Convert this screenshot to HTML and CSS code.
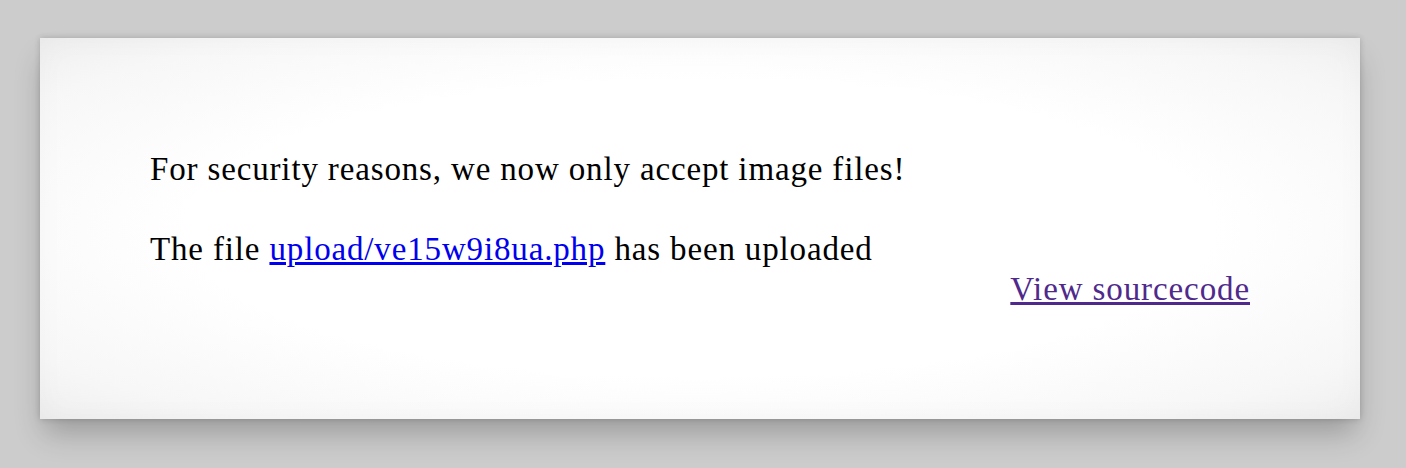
FILE: index.html
```
<!DOCTYPE html>
<html>
<head>
<meta charset="utf-8">
<link rel="stylesheet" href="styles.css">
</head>
<body>
<div class="content">
For security reasons, we now only accept image files!<br><br>
The file <a class="link" href="#">upload/ve15w9i8ua.php</a> has been uploaded<div class="viewsource"><a class="visited" href="#">View sourcecode</a></div>
</div>
</body>
</html>
```
FILE: styles.css
```
html, body {
  margin: 0;
  padding: 0;
  background: #cccccc;
}
body {
  padding: 38px 0 0 40px;
  height: 468px;
  box-sizing: border-box;
  overflow: hidden;
}
.content {
  width: 1320px;
  box-sizing: border-box;
  padding: 111px 110px 110px 110px;
  background: radial-gradient(ellipse closest-corner at center, #ffffff 55%, #f7f7f7 85%, #efefef 100%);
  font-family: "Liberation Serif", "Times New Roman", serif;
  font-size: 33px;
  letter-spacing: 0.85px;
  line-height: 40px;
  color: #000;
  box-shadow: 0 0 6px rgba(0,0,0,0.18), 0 18px 28px -4px rgba(0,0,0,0.24), inset 0 0 30px rgba(0,0,0,0.03);
}
.link {
  color: #0000ee;
  text-decoration: underline;
}
.visited {
  color: #4f2a8c;
  text-decoration: underline;
}
.viewsource {
  text-align: right;
  letter-spacing: 0.9px;
}
```
